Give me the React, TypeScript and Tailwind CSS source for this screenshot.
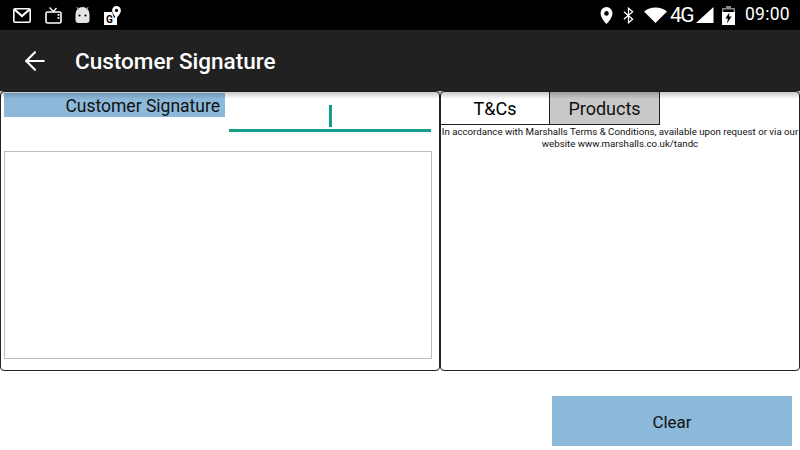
import { ArrowLeft } from "lucide-react"

function StatusIcons() {
  return (
    <div className="flex items-center">
      {/* gmail */}
      <svg width="18" height="15" viewBox="0 0 18 15">
        <rect x="0.8" y="0.8" width="16.4" height="13.4" rx="1.2" fill="#000" stroke="#fff" strokeWidth="1.6" />
        <path d="M1.5 1.5L9 8l7.5-6.5" fill="none" stroke="#fff" strokeWidth="2.2" />
      </svg>
      {/* tv */}
      <svg width="17" height="17" viewBox="0 0 17 17" className="ml-[14px]">
        <path d="M4.5 0.5L8.5 4.5L11.5 1" fill="none" stroke="#fff" strokeWidth="1.3" />
        <rect x="1" y="5" width="15" height="11" rx="1.5" fill="none" stroke="#fff" strokeWidth="1.6" />
        <rect x="12.6" y="7" width="1.8" height="1.8" fill="#fff" />
        <rect x="12.6" y="10" width="1.8" height="1.8" fill="#fff" />
      </svg>
      {/* android head */}
      <svg width="15" height="17" viewBox="0 0 15 17" className="ml-[13px]">
        <path d="M0.5 7a7 7 0 0 1 14 0v6a3 3 0 0 1-3 3h-8a3 3 0 0 1-3-3z" fill="#e4e4e4" />
        <path d="M3 3L2 0M12 3l1-3" stroke="#999" strokeWidth="1.2" />
        <circle cx="4.5" cy="8.5" r="1.1" fill="#000" />
        <circle cx="10.5" cy="8.5" r="1.1" fill="#000" />
      </svg>
      {/* maps */}
      <svg width="17" height="19" viewBox="0 0 17 19" className="ml-[14px]">
        <path d="M0 6h8l2 6 3-3v10H0z" fill="#fff" />
        <path d="M12.5 0a4.4 4.4 0 0 1 4.4 4.4c0 3-4.4 7.6-4.4 7.6S8.1 7.4 8.1 4.4A4.4 4.4 0 0 1 12.5 0z" fill="#fff" />
        <circle cx="12.5" cy="4.4" r="1.6" fill="#000" />
        <text x="2" y="16.5" fontSize="10" fontWeight="700" fontFamily="Roboto, sans-serif" fill="#000">G</text>
      </svg>
    </div>
  )
}

function SystemIcons() {
  return (
    <div className="flex items-center text-white">
      {/* location */}
      <svg width="13" height="17" viewBox="0 0 14 17" preserveAspectRatio="none">
        <path d="M7 0a6.4 6.4 0 0 1 6.4 6.4C13.4 11 7 17 7 17S.6 11 .6 6.4A6.4 6.4 0 0 1 7 0z" fill="#fff" />
        <circle cx="7" cy="6.4" r="2.4" fill="#000" />
      </svg>
      {/* bluetooth */}
      <svg width="11" height="17" viewBox="0 0 12 17" className="ml-[10px]">
        <path d="M1 4.5l9.5 8L6 16.4V.6l4.5 3.9L1 12.5" fill="none" stroke="#fff" strokeWidth="1.4" />
      </svg>
      {/* wifi */}
      <svg width="23" height="16" viewBox="0 0 22 16" preserveAspectRatio="none" className="ml-[10px]">
        <path d="M0 4.5C3 2 7 .5 11 .5s8 1.5 11 4L11 16z" fill="#fff" />
      </svg>
      <span className="ml-[3px] w-[23px] font-['Roboto',sans-serif] text-[21px] leading-none tracking-[-1.5px]">4G</span>
      {/* signal */}
      <svg width="18" height="16" viewBox="0 0 18 17" preserveAspectRatio="none" className="ml-[3px]">
        <path d="M17.5 0v17H0z" fill="#fff" />
      </svg>
      {/* battery */}
      <svg width="13" height="19" viewBox="0 0 13 19" className="ml-[8px]">
        <path d="M4 0h5v2h4v17H0V2h4z" fill="#8a8a8a" />
        <path d="M1.5 3.5h10V6h-10z" fill="#000" />
        <path d="M0 6h13v13H0z" fill="#fff" />
        <path d="M7.4 6.5L3.4 12.5h2.5L5 17.5l4.6-7H7z" fill="#000" />
      </svg>
      <span className="ml-[10px] font-['Roboto',sans-serif] text-[17.5px] leading-none tracking-[0.3px]">09:00</span>
    </div>
  )
}

export default function App() {
  return (
    <div className="w-[800px] h-[450px] bg-white flex flex-col overflow-hidden font-['Roboto',sans-serif] text-black">
      {/* status bar */}
      <div className="h-[30px] bg-black flex items-center justify-between pl-[13px] pr-[10px] shrink-0">
        <StatusIcons />
        <SystemIcons />
      </div>

      {/* toolbar */}
      <div className="h-[61px] bg-[#212121] flex items-center shrink-0 text-white">
        <ArrowLeft className="ml-[20px] w-[30px] h-[30px]" strokeWidth={1.7} />
        <h1 className="ml-[25px] pt-[1px] text-[22.5px] font-medium leading-none">Customer Signature</h1>
      </div>

      <div className="relative flex-1 flex flex-col">
        {/* toolbar shadow */}
        <div className="absolute top-0 left-0 right-0 h-[8px] bg-gradient-to-b from-black/25 to-transparent z-10"></div>

        <div className="flex h-[280px]">
          {/* signature panel */}
          <div className="w-[440px] border border-[#222] rounded-[4px] flex flex-col">
            <div className="flex items-start">
              <div className="ml-[3px] mt-[1px] w-[221px] h-[24px] bg-[#8cb8da] text-[17.5px] leading-[26px] text-right pr-[5px] text-[#111]">
                Customer Signature
              </div>
              <div className="ml-[4px] w-[202px] h-[27px] mt-[13px] border-b-[3px] border-[#16a08b] flex justify-center">
                <div className="w-[3px] h-[22px] bg-[#16a08b]"></div>
              </div>
            </div>
            <div className="ml-[3px] mt-[19px] w-[428px] h-[208px] border border-[#bdbdbd]"></div>
          </div>

          {/* terms panel */}
          <div className="w-[360px] border border-[#222] rounded-[4px] flex flex-col overflow-hidden">
            <div className="flex h-[33px] shrink-0">
              <div className="w-[109px] border-r border-b border-[#222] flex items-center justify-center pt-[1px] text-[18px]">T&amp;Cs</div>
              <div className="w-[110px] border-r border-b border-[#222] bg-[#c8c8c8] flex items-center justify-center pt-[1px] text-[18px] text-[#111]">Products</div>
            </div>
            <p className="whitespace-nowrap text-center text-[9.7px] leading-[12px] pt-[1px] text-[#111]">
              In accordance with Marshalls Terms &amp; Conditions, available upon request or via our
              <br />
              website www.marshalls.co.uk/tandc
            </p>
          </div>
        </div>

        {/* actions */}
        <div className="flex justify-end pr-[8px] pt-[25px]">
          <button className="w-[240px] h-[50px] pt-[3px] bg-[#8cb8da] text-[17px] text-[#111]">Clear</button>
        </div>
      </div>
    </div>
  )
}
